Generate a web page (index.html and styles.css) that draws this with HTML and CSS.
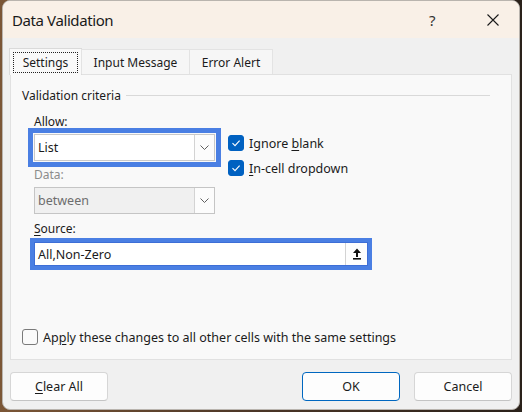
FILE: index.html
```html
<!DOCTYPE html>
<html lang="en">
<head>
    <meta charset="UTF-8">
    <title>Data Validation</title>
    <link rel="stylesheet" href="styles.css">
</head>
<body>
    <div class="window">
        <!-- Title bar -->
        <div class="titlebar">
            <span class="title">Data Validation</span>
            <span class="help">?</span>
            <span class="close">
                <svg width="12" height="12" viewBox="0 0 12 12">
                    <path d="M0.5 0.5 L11.5 11.5 M11.5 0.5 L0.5 11.5" stroke="#1a1a1a" stroke-width="1.1" fill="none"></path>
                </svg>
            </span>
        </div>

        <div class="dialog">
            <!-- Tabs -->
            <div class="tabs">
                <div class="tab active"><span class="focus">Settings</span></div>
                <div class="tab input-tab">Input Message</div>
                <div class="tab error-tab">Error Alert</div>
            </div>

            <!-- Settings page -->
            <div class="panel">
                <div class="group-title">
                    <span>Validation criteria</span>
                    <span class="rule"></span>
                </div>

                <div class="criteria">
                    <div class="col">
                        <div class="label"><u>A</u>llow:</div>
                        <div class="combo marked">
                            <span class="value">List</span>
                            <span class="drop">
                                <svg width="9" height="5" viewBox="0 0 9 5"><path d="M0.5 0.5 L4.5 4.5 L8.5 0.5" stroke="#5f5f5f" stroke-width="1" fill="none"></path></svg>
                            </span>
                        </div>
                        <div class="label disabled data-label">Data:</div>
                        <div class="combo disabled">
                            <span class="value">between</span>
                            <span class="drop">
                                <svg width="9" height="5" viewBox="0 0 9 5"><path d="M0.5 0.5 L4.5 4.5 L8.5 0.5" stroke="#5f5f5f" stroke-width="1" fill="none"></path></svg>
                            </span>
                        </div>
                    </div>

                    <div class="checks">
                        <div class="check">
                            <span class="box on">
                                <svg width="16" height="16" viewBox="0 0 16 16"><path d="M4.5 8.2 L7 10.6 L11.6 5.6" stroke="#fff" stroke-width="1.1" fill="none"></path></svg>
                            </span>
                            <span>Ignore <u>b</u>lank</span>
                        </div>
                        <div class="check">
                            <span class="box on">
                                <svg width="16" height="16" viewBox="0 0 16 16"><path d="M4.5 8.2 L7 10.6 L11.6 5.6" stroke="#fff" stroke-width="1.1" fill="none"></path></svg>
                            </span>
                            <span><u>I</u>n-cell dropdown</span>
                        </div>
                    </div>
                </div>

                <div class="label source-label"><u>S</u>ource:</div>
                <div class="source marked">
                    <span class="value">All,Non-Zero</span>
                    <span class="collapse">
                        <svg width="10" height="12" viewBox="0 0 10 12">
                            <path d="M5 0.5 L9 5 L6 5 L6 9 L4 9 L4 5 L1 5 Z" fill="#111"></path>
                            <rect x="1" y="10" width="8" height="1.6" fill="#111"></rect>
                        </svg>
                    </span>
                </div>

                <div class="check apply">
                    <span class="box"></span>
                    <span>Ap<u>p</u>ly these changes to all other cells with the same settings</span>
                </div>
            </div>

            <!-- Buttons -->
            <div class="buttons">
                <button class="btn"><u>C</u>lear All</button>
                <span class="spacer"></span>
                <button class="btn default">OK</button>
                <button class="btn">Cancel</button>
            </div>
        </div>
    </div>
</body>
</html>
```

FILE: styles.css
```css
/* Reset */
* {
    margin: 0;
    padding: 0;
    box-sizing: border-box;
}
/* Desktop behind the dialog */
body {
    width: 522px;
    height: 412px;
    overflow: hidden;
    font-family: "Noto Sans", "Open Sans", sans-serif;
    font-size: 12px;
    color: #1b1b1b;
    background: linear-gradient(90deg, #7b5636 0%, #4a3526 50%, #2a211a 100%);
}
u {
    text-decoration-thickness: 1px;
    text-underline-offset: 2px;
}
/* Window frame */
.window {
    margin-left: 2px;
    width: 518px;
    height: 410px;
    background: #f0f0f0;
    border: 1px solid #b9b4ae;
    border-radius: 8px;
    overflow: hidden;
    display: flex;
    flex-direction: column;
}
.titlebar {
    height: 37px;
    flex: none;
    display: flex;
    align-items: center;
    background: #f9f0e7;
    padding-left: 9px;
}
.title {
    font-size: 15px;
    letter-spacing: -0.4px;
    flex: 1;
    color: #1a1a1a;
}
.help {
    font-size: 15px;
    width: 16px;
    margin-right: 42px;
    color: #333;
}
.close {
    display: flex;
    width: 12px;
    margin-right: 20px;
}
/* Dialog body */
.dialog {
    flex: 1;
    display: flex;
    flex-direction: column;
    padding: 10px 7px 8px 7px;
}
.tabs {
    display: flex;
    align-items: flex-end;
    margin-left: -1px;
    position: relative;
    z-index: 1;
}
.tab {
    height: 25px;
    display: flex;
    align-items: center;
    justify-content: center;
    background: #f6f6f6;
    border: 1px solid #e3e3e3;
    border-bottom: none;
    margin-left: -1px;
}
.tab:first-child {
    margin-left: 0;
}
.tab.active {
    width: 73px;
    height: 27px;
    margin-bottom: -1px;
    background: #f9f9f9;
    border-color: #dadada;
}
.input-tab {
    width: 109px;
}
.error-tab {
    width: 84px;
}
.focus {
    border: 1px dotted #222;
    width: 65px;
    height: 21px;
    display: flex;
    align-items: center;
    justify-content: center;
    margin-top: 1px;
}
.panel {
    height: 286px;
    display: flex;
    flex-direction: column;
    background: #f9f9f9;
    border: 1px solid #e1e1e1;
    padding: 12px 11px 14px 11px;
}
/* Group box caption */
.group-title {
    display: flex;
    align-items: center;
    height: 16px;
}
.rule {
    flex: 1;
    height: 1px;
    background: #d9d9d9;
    margin: 0 10px 0 5px;
}
.label {
    line-height: 16px;
}
.criteria {
    display: flex;
    margin-top: 11px;
    padding-left: 12px;
}
.col {
    width: 181px;
}
.combo {
    height: 27px;
    margin-top: 4px;
    display: flex;
    align-items: center;
    background: #fff;
    border: 1px solid #c9c9c9;
}
.combo .value,
.source .value {
    flex: 1;
    padding-left: 3px;
    font-size: 12.5px;
}
.drop {
    width: 20px;
    height: 100%;
    display: flex;
    align-items: center;
    justify-content: center;
    border-left: 1px solid #d3d3d3;
    background: #fcfcfc;
}
/* blue annotation frame */
.marked {
    outline: 5px solid #4a7fe3;
    outline-offset: 1px;
}
.disabled {
    color: #8c8c8c;
}
.combo.disabled {
    background: #f0f0f0;
    border-color: #c5c5c5;
}
.combo.disabled .value {
    color: #6d6d6d;
}
.data-label {
    margin-top: 6px;
}
.checks {
    padding-top: 21px;
    margin-left: 13px;
    display: flex;
    flex-direction: column;
    gap: 9px;
}
.check {
    display: flex;
    align-items: center;
    gap: 5px;
    height: 16px;
    font-size: 12.5px;
}
.box {
    width: 16px;
    height: 16px;
    border-radius: 3px;
    border: 1px solid #7a7a7a;
    background: #fafafa;
    display: flex;
}
.box.on {
    background: #0061c1;
    border-color: #0061c1;
}
.box.on svg {
    margin: -1px;
}
.source-label {
    margin-top: 7px;
    margin-left: 12px;
}
.source {
    margin: 5px 0 0 12px;
    width: 334px;
    height: 24px;
    display: flex;
    align-items: center;
    background: #fff;
    border: 1px solid #3d6ed6;
    outline-width: 4px;
    outline-offset: 0;
}
.collapse {
    width: 22px;
    height: 100%;
    display: flex;
    align-items: center;
    justify-content: center;
    border-left: 1px solid #d3d3d3;
    background: #fdfdfd;
}
.apply {
    margin-top: auto;
}
/* Footer buttons */
.buttons {
    display: flex;
    margin-top: 12px;
    gap: 14px;
}
.spacer {
    flex: 1;
}
.btn {
    width: 98px;
    height: 29px;
    font-family: inherit;
    font-size: 12.5px;
    color: #1b1b1b;
    background: #fdfdfd;
    border: 1px solid #d6d6d6;
    border-bottom-color: #c4c4c4;
    border-radius: 4px;
}
.btn.default {
    border: 1px solid #0067c0;
}
```
